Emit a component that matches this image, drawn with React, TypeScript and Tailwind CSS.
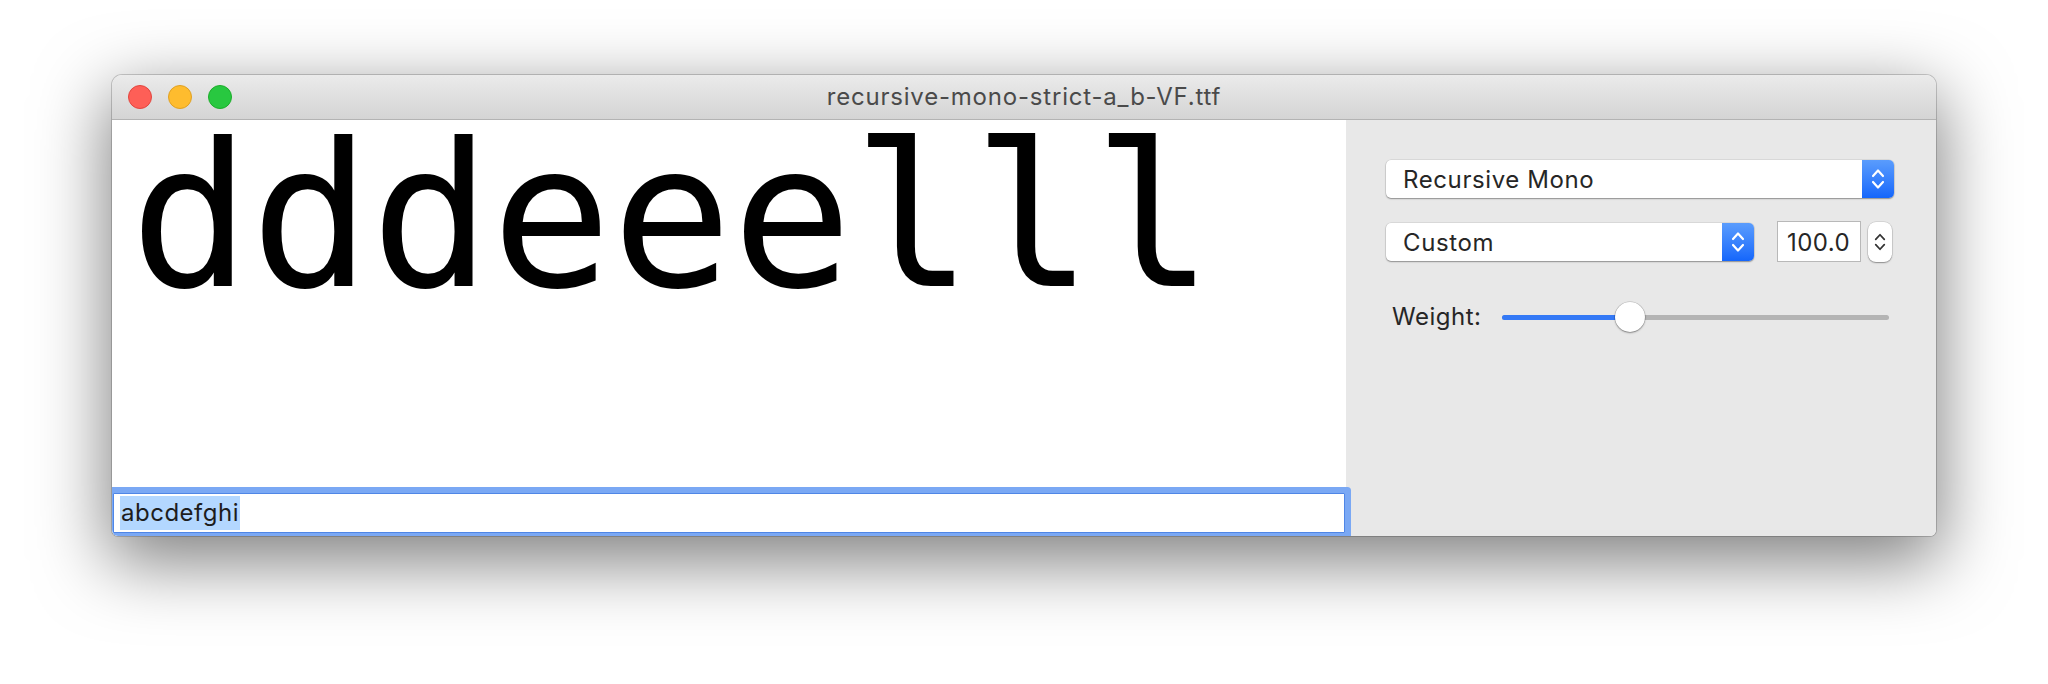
import React from 'react'

// 上下シェブロン（ポップアップボタン用）
function Chevrons({ color = 'white', w = 14, sw = 2.2 }: { color?: string; w?: number; sw?: number }) {
  return (
    <svg width={w} height={24} viewBox="0 0 14 24" fill="none">
      <path d="M2 9 L7 3.5 L12 9" stroke={color} strokeWidth={sw} strokeLinecap="round" strokeLinejoin="round" />
      <path d="M2 15 L7 20.5 L12 15" stroke={color} strokeWidth={sw} strokeLinecap="round" strokeLinejoin="round" />
    </svg>
  )
}

function PopUp({ label, width }: { label: string; width: string }) {
  return (
    <div className={`${width} h-[38px] flex bg-white rounded-[5px] shadow-[0_1px_1.5px_rgba(0,0,0,0.35),0_0_0_0.5px_rgba(0,0,0,0.12)]`}>
      <div className="flex-1 flex items-center pl-[17px] pt-[2px] text-[24px] tracking-[0.6px] text-[#262626]">{label}</div>
      <div className="w-[32px] h-full rounded-r-[5px] bg-gradient-to-b from-[#5a9cfd] to-[#1466fb] flex items-center justify-center">
        <Chevrons />
      </div>
    </div>
  )
}

export default function App() {
  const ui = { fontFamily: 'Inter, "Liberation Sans", sans-serif' }
  return (
    <div className="w-[2048px] h-[684px] bg-white pt-[75px] pl-[112px]" style={ui}>
      <div className="w-[1824px] h-[461px] flex flex-col rounded-t-[10px] rounded-b-[6px] overflow-hidden shadow-[0_22px_70px_4px_rgba(0,0,0,0.5),0_0_0_1px_rgba(0,0,0,0.18)]">
        {/* タイトルバー */}
        <div className="h-[45px] shrink-0 flex items-center bg-gradient-to-b from-[#ebebeb] to-[#d4d4d4] border-b border-[#b3b3b3]">
          <div className="w-[130px] pl-[16px] flex gap-[16px]">
            <div className="w-[24px] h-[24px] rounded-full bg-[#fe5f57] border border-[#e1463f]" />
            <div className="w-[24px] h-[24px] rounded-full bg-[#febc2e] border border-[#dfa023]" />
            <div className="w-[24px] h-[24px] rounded-full bg-[#28c840] border border-[#1dad2b]" />
          </div>
          <div className="flex-1 text-center text-[24px] text-[#4a4a4a] tracking-[0.8px] pr-[130px]">recursive-mono-strict-a_b-VF.ttf</div>
        </div>

        <div className="flex-1 flex min-h-0">
          {/* 左：プレビュー */}
          <div className="w-[1234px] flex flex-col bg-white">
            <div
              className="flex-1 pl-[18px] pt-[7px] text-[200px] leading-[180px] text-black"
              style={{ fontFamily: '"DejaVu Sans Mono", "Liberation Mono", monospace' }}
            >
              dddeeelll
            </div>
            <div className="relative z-10 mr-[1px] mb-[3px] ml-[1px]">
              <div className="h-[40px] bg-white border border-[#4f86e6] shadow-[0_0_0_6px_#7aa8f4] rounded-[1px] flex items-center pl-[6px]">
                <span className="bg-[#b3d7ff] text-[24px] tracking-[0.5px] text-[#1d1d1d] leading-[34px] px-[1px]">abcdefghi</span>
              </div>
            </div>
          </div>

          {/* 右：コントロール */}
          <div className="flex-1 bg-[#e8e8e8] pl-[40px] pr-[42px] pt-[40px]">
            <PopUp label="Recursive Mono" width="w-[508px]" />
            <div className="mt-[23px] flex items-center">
              <PopUp label="Custom" width="w-[368px]" />
              <div className="ml-[23px] w-[84px] h-[41px] bg-white border border-[#b8b8b8] flex items-center justify-end pr-[10px] pt-[2px] text-[24px] tracking-[0.4px] text-[#262626]">
                100.0
              </div>
              <div className="ml-[7px] w-[24px] h-[40px] bg-white rounded-[8px] shadow-[0_1px_1.5px_rgba(0,0,0,0.35),0_0_0_0.5px_rgba(0,0,0,0.15)] flex items-center justify-center">
                <Chevrons color="#333" w={12} sw={2} />
              </div>
            </div>
            <div className="mt-[37px] flex items-center">
              <span className="w-[116px] pl-[6px] text-[24px] tracking-[0.5px] text-[#262626]">Weight:</span>
              <div className="relative w-[387px] h-[30px] flex items-center">
                <div className="w-full h-[5px] rounded-full bg-[#b4b4b4] flex">
                  <div className="w-[128px] h-full rounded-full bg-[#3479f6]" />
                </div>
                <div className="absolute left-[113px] top-0 w-[30px] h-[30px] rounded-full bg-white shadow-[0_1px_2px_rgba(0,0,0,0.35),0_0_0_0.5px_rgba(0,0,0,0.2)]" />
              </div>
            </div>
          </div>
        </div>
      </div>
    </div>
  )
}
